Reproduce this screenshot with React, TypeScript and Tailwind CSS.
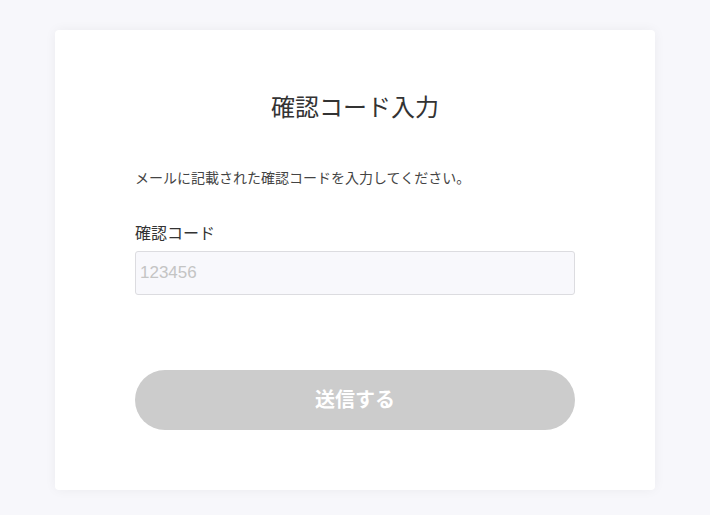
export default function App() {
  return (
    <div
      className="min-h-[515px] w-full bg-[#f7f7fb] pt-[30px]"
      style={{ fontFamily: '"Liberation Sans", "Noto Sans CJK JP", sans-serif' }}
    >
      <div className="mx-auto flex h-[460px] w-[600px] flex-col rounded-[4px] bg-white px-[80px] pt-[60px] shadow-[0_0_12px_rgba(0,0,0,0.05)]">
        <h1 className="text-center text-[24px] leading-[36px] text-[#333]">確認コード入力</h1>
        <p className="mt-[42px] text-[14px] leading-[20px] text-[#444]">
          メールに記載された確認コードを入力してください。
        </p>
        <label className="mt-[34px] text-[16px] leading-[24px] text-[#333]">確認コード</label>
        <input
          className="mt-[5px] h-[44px] w-full rounded-[3px] border border-[#dcdce0] bg-[#f8f8fc] px-[4px] text-[17px] text-[#333] outline-none placeholder:text-[#c4c4c4]"
          placeholder="123456"
        />
        <button className="mt-[75px] h-[60px] w-full rounded-full bg-[#cccccc] text-[20px] font-bold text-white">
          送信する
        </button>
      </div>
    </div>
  );
}
